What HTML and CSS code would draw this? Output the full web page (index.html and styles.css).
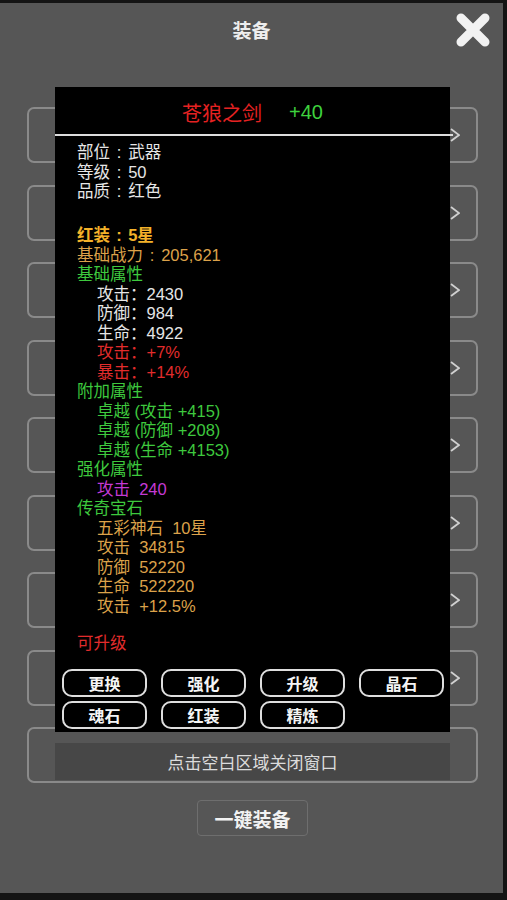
FILE: index.html
```html
<!DOCTYPE html>
<html lang="zh">
<head>
<meta charset="utf-8">
<link rel="stylesheet" href="styles.css">
</head>
<body>
<div class="app">
  <div class="header"><span class="title">装备</span></div>
  <div class="close">
    <svg width="36" height="36" viewBox="0 0 36 36"><path d="M6 6 L30 30 M30 6 L6 30" stroke="#f2f2f2" stroke-width="9" stroke-linecap="round"/></svg>
  </div>
  <div class="slots">
    <div class="slot"><svg class="arrow" width="10" height="14" viewBox="0 0 10 14"><polyline points="1,1 9,7 1,13" fill="none" stroke="#d0d0d0" stroke-width="1.8"/></svg></div>
    <div class="slot"><svg class="arrow" width="10" height="14" viewBox="0 0 10 14"><polyline points="1,1 9,7 1,13" fill="none" stroke="#d0d0d0" stroke-width="1.8"/></svg></div>
    <div class="slot"><svg class="arrow" width="10" height="14" viewBox="0 0 10 14"><polyline points="1,1 9,7 1,13" fill="none" stroke="#d0d0d0" stroke-width="1.8"/></svg></div>
    <div class="slot"><svg class="arrow" width="10" height="14" viewBox="0 0 10 14"><polyline points="1,1 9,7 1,13" fill="none" stroke="#d0d0d0" stroke-width="1.8"/></svg></div>
    <div class="slot"><svg class="arrow" width="10" height="14" viewBox="0 0 10 14"><polyline points="1,1 9,7 1,13" fill="none" stroke="#d0d0d0" stroke-width="1.8"/></svg></div>
    <div class="slot"><svg class="arrow" width="10" height="14" viewBox="0 0 10 14"><polyline points="1,1 9,7 1,13" fill="none" stroke="#d0d0d0" stroke-width="1.8"/></svg></div>
    <div class="slot"><svg class="arrow" width="10" height="14" viewBox="0 0 10 14"><polyline points="1,1 9,7 1,13" fill="none" stroke="#d0d0d0" stroke-width="1.8"/></svg></div>
    <div class="slot"><svg class="arrow" width="10" height="14" viewBox="0 0 10 14"><polyline points="1,1 9,7 1,13" fill="none" stroke="#d0d0d0" stroke-width="1.8"/></svg></div>
    <div class="slot"></div>
  </div>
  <div class="onekey">一键装备</div>

  <div class="popup">
    <div class="ptitle"><span class="pname">苍狼之剑</span><span class="plevel">+40</span></div>
    <div class="pline"></div>
    <div class="info">
      <div class="group">
        <div class="ln white">部位<span class="c">:</span>武器</div>
        <div class="ln white">等级<span class="c">:</span>50</div>
        <div class="ln white">品质<span class="c">:</span>红色</div>
      </div>
      <div class="group g2">
        <div class="ln gold bold">红装<span class="c">:</span>5星</div>
        <div class="ln orange">基础战力<span class="c">:</span>205,621</div>
        <div class="ln green">基础属性</div>
        <div class="ln white ind">攻击：2430</div>
        <div class="ln white ind">防御：984</div>
        <div class="ln white ind">生命：4922</div>
        <div class="ln red ind">攻击：+7%</div>
        <div class="ln red ind">暴击：+14%</div>
        <div class="ln green">附加属性</div>
        <div class="ln green ind">卓越 (攻击 +415)</div>
        <div class="ln green ind">卓越 (防御 +208)</div>
        <div class="ln green ind">卓越 (生命 +4153)</div>
        <div class="ln green">强化属性</div>
        <div class="ln purple ind">攻击  240</div>
        <div class="ln green">传奇宝石</div>
        <div class="ln orange ind">五彩神石  10星</div>
        <div class="ln orange ind">攻击  34815</div>
        <div class="ln orange ind">防御  52220</div>
        <div class="ln orange ind">生命  522220</div>
        <div class="ln orange ind">攻击  +12.5%</div>
      </div>
      <div class="group g3">
        <div class="ln red">可升级</div>
      </div>
    </div>
    <div class="btns">
      <div class="btn">更换</div>
      <div class="btn">强化</div>
      <div class="btn">升级</div>
      <div class="btn">晶石</div>
      <div class="btn">魂石</div>
      <div class="btn">红装</div>
      <div class="btn">精炼</div>
    </div>
  </div>
  <div class="closebar">点击空白区域关闭窗口</div>
</div>
</body>
</html>
```

FILE: styles.css
```css
html, body {
  margin: 0;
  padding: 0;
}
body {
  width: 507px;
  height: 900px;
  overflow: hidden;
  background: #141414;
  font-family: "Liberation Sans", "Noto Sans CJK SC", sans-serif;
}
.app {
  position: relative;
  width: 503px;
  height: 890px;
  margin-top: 3px;
  background: #565656;
}
.header {
  height: 52px;
  display: flex;
  align-items: center;
  justify-content: center;
}
.title {
  color: #eeeeee;
  font-size: 19px;
  font-weight: bold;
}
.close {
  position: absolute;
  left: 455px;
  top: 9px;
  width: 36px;
  height: 36px;
}
.slots {
  margin-top: 52px;
  margin-left: 27px;
  width: 451px;
  display: flex;
  flex-direction: column;
  gap: 21.5px;
}
.slot {
  box-sizing: border-box;
  height: 56px;
  border: 2px solid #8a8a8a;
  border-radius: 7px;
  display: flex;
  align-items: center;
  justify-content: flex-end;
  padding-right: 16px;
}
.onekey {
  box-sizing: border-box;
  margin-top: 17px;
  margin-left: 197px;
  width: 111px;
  height: 36px;
  border: 1.5px solid #6e6e6e;
  border-radius: 4px;
  display: flex;
  align-items: center;
  justify-content: center;
  color: #f2f2f2;
  font-size: 19px;
  font-weight: bold;
}
.popup {
  position: absolute;
  left: 55px;
  top: 84px;
  width: 395px;
  height: 645px;
  background: #000;
}
.ptitle {
  box-sizing: border-box;
  height: 47px;
  padding-top: 4px;
  display: flex;
  align-items: center;
  justify-content: center;
  gap: 27px;
  font-size: 20px;
}
.pname {
  color: #e52222;
}
.plevel {
  color: #3ed23e;
}
.pline {
  width: 398px;
  height: 2px;
  background: #dcdcdc;
}
.info {
  padding-left: 22px;
  margin-top: 7px;
  font-size: 16.5px;
  line-height: 19.5px;
}
.ln {
  white-space: pre;
  height: 19.5px;
}
.c {
  display: inline-block;
  width: 1.1em;
  text-align: center;
}
.g2 {
  margin-top: 24.5px;
}
.g3 {
  margin-top: 17.5px;
}
.ind {
  padding-left: 20px;
}
.white { color: #e6e6e6; }
.gold { color: #f4b22a; }
.bold { font-weight: bold; }
.orange { color: #dca24a; }
.green { color: #3ec93e; }
.red { color: #e22c2c; }
.purple { color: #c43ad4; }
.btns {
  margin-top: 16px;
  margin-left: 7px;
  display: grid;
  grid-template-columns: repeat(4, 85px);
  column-gap: 14px;
  row-gap: 4px;
}
.btn {
  box-sizing: border-box;
  height: 28px;
  border: 2px solid #dedede;
  border-radius: 10px;
  display: flex;
  align-items: center;
  justify-content: center;
  color: #f5f5f5;
  font-size: 16px;
  font-weight: bold;
}
.closebar {
  position: absolute;
  left: 55px;
  top: 740px;
  width: 395px;
  height: 37px;
  background: #474747;
  display: flex;
  align-items: center;
  justify-content: center;
  color: #dcdcdc;
  font-size: 17px;
}
```
